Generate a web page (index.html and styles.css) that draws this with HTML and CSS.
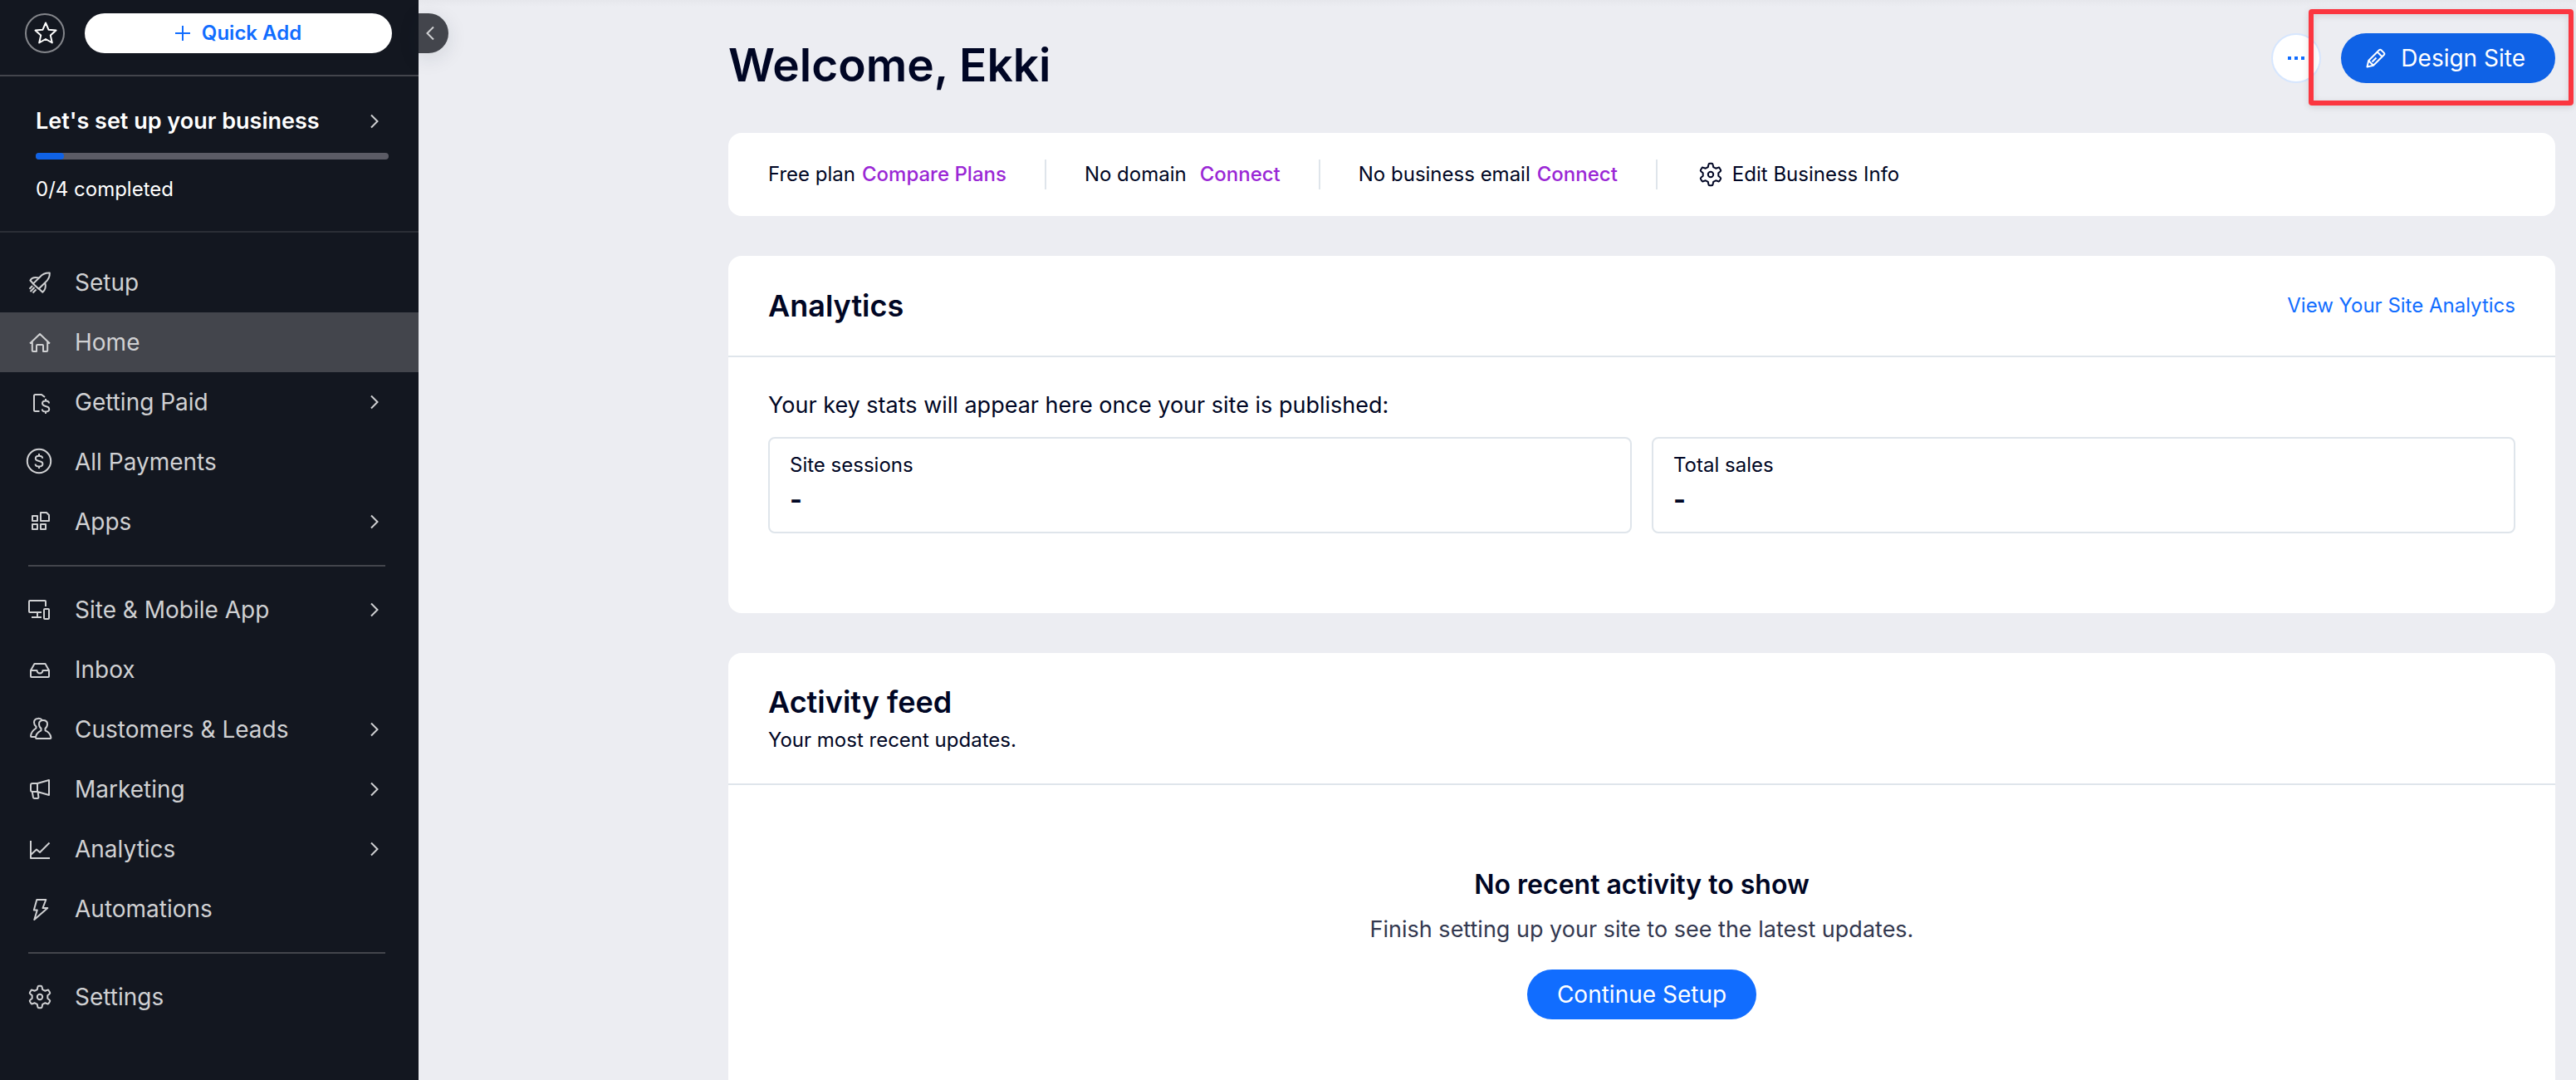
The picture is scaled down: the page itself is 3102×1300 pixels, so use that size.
FILE: index.html
```html
<!DOCTYPE html>
<html lang="en">
<head>
<meta charset="utf-8">
<meta name="viewport" content="width=device-width, initial-scale=1">
<title>Site Dashboard</title>
<link rel="stylesheet" href="styles.css">
</head>
<body>
<svg class="sprite" aria-hidden="true">
  <symbol id="gear" viewBox="0 0 36 36">
    <path transform="translate(18 18)" d="M-3.2-8.9L-2.6-12Q-2.4-13.2-1.2-13.2H1.2Q2.4-13.2 2.6-12L3.2-8.9L6.1-7.3L9.1-8.3Q10.2-8.7 10.8-7.6L12-5.6Q12.6-4.5 11.7-3.8L9.3-1.7V1.7L11.7 3.8Q12.6 4.5 12 5.6L10.8 7.6Q10.2 8.7 9.1 8.3L6.1 7.3L3.2 8.9L2.6 12Q2.4 13.2 1.2 13.2H-1.2Q-2.4 13.2-2.6 12L-3.2 8.9L-6.1 7.3L-9.1 8.3Q-10.2 8.7-10.8 7.6L-12 5.6Q-12.6 4.5-11.7 3.8L-9.3 1.7V-1.7L-11.7-3.8Q-12.6-4.5-12-5.6L-10.8-7.6Q-10.2-8.7-9.1-8.3L-6.1-7.3Z"/>
    <circle cx="18" cy="18" r="3.2"/>
  </symbol>
  <symbol id="chevron" viewBox="0 0 10 18"><path d="M1 1.5L8.5 9L1 16.5"/></symbol>
</svg>

<div class="app">
  <aside class="sidebar">
    <div class="quick">
      <button class="star" type="button" aria-label="Favorites">
        <svg class="icon" viewBox="0 0 36 36"><path d="M19 5.5L22.6 13.8L31.5 14.6L24.8 20.6L26.8 29.5L19 25L11.2 29.5L13.2 20.6L6.5 14.6L15.4 13.8Z"/></svg>
      </button>
      <button class="quick-add" type="button">
        <svg class="plus" viewBox="0 0 18 18"><path d="M9 0V18M0 9H18"/></svg>
        Quick Add
      </button>
    </div>

    <button class="collapse" type="button" aria-label="Collapse menu">
      <svg class="chevron back" viewBox="0 0 10 18"><path d="M9 1.5L1.5 9L9 16.5"/></svg>
    </button>

    <a class="progress-card" href="#">
      <span class="progress-title">Let's set up your business
        <svg class="chevron"><use href="#chevron"/></svg>
      </span>
      <span class="track"><span class="fill" style="width: 8%"></span></span>
      <span class="progress-note">0/4 completed</span>
    </a>

    <nav class="nav">
      <ul class="group">
        <li><a href="#" class="nav-item">
          <svg class="icon" viewBox="0 0 36 36"><path d="M29.8 6.6C25 6.3 21 8 18 11.5L9.8 19.6L16.6 25.8L24.5 18C28.5 14.5 30 10.5 29.8 6.6ZM17 12.5C12 11.2 8 12.5 6.4 15.5L10.5 20M24.3 18.5C25.5 23 24.5 27 21.3 29.8L16.8 25.5M9.2 22L5.5 25.8M11.5 24L6.5 29M13.5 26.5L9.5 30.5"/></svg>
          <span>Setup</span></a></li>
        <li><a href="#" class="nav-item active" aria-current="page">
          <svg class="icon" viewBox="0 0 36 36"><path d="M6 19.5L18 8L30 19.5M8.8 17.5V28Q8.8 29 10 29H14V22Q14 21 15 21H21Q22 21 22 22V29H26Q27.2 29 27.2 28V17.5"/></svg>
          <span>Home</span></a></li>
        <li><a href="#" class="nav-item">
          <svg class="icon" viewBox="0 0 36 36"><path d="M24 12L20 9H12.5Q11 9 11 10.5V27.5Q11 29 12.5 29H17.5M29 19.6C29 17.6 27.5 16.5 25 16.5S21 17.6 21 19.6S22.5 22.4 25 22.9S29.2 24.2 29.2 26.4S27.5 29.5 25 29.5S20.8 28.4 20.8 26.4M25 14V16.5M25 29.5V32"/></svg>
          <span>Getting Paid</span><svg class="chevron"><use href="#chevron"/></svg></a></li>
        <li><a href="#" class="nav-item">
          <svg class="icon" viewBox="0 0 36 36"><circle cx="17" cy="17" r="14.2"/><path d="M21.2 13.8C21.2 11.8 19.6 10.8 17 10.8S12.8 11.8 12.8 13.8S14.4 16.5 17 17S21.4 18.3 21.4 20.4S19.6 23.4 17 23.4S12.6 22.4 12.6 20.4M17 8V11M17 23.4V26"/></svg>
          <span>All Payments</span></a></li>
        <li><a href="#" class="nav-item">
          <svg class="icon" viewBox="0 0 36 36"><path d="M9 11H15V17H9ZM9 21H15V27H9ZM19 21H25V27H19ZM19 7H26L29 10V17H19Z"/></svg>
          <span>Apps</span><svg class="chevron"><use href="#chevron"/></svg></a></li>
      </ul>
      <ul class="group">
        <li><a href="#" class="nav-item">
          <svg class="icon" viewBox="0 0 36 36"><path d="M25 14V8Q25 7 24 7H6Q5 7 5 8V20Q5 21 6 21H20M15 21V27M8 27H20M24 17H28Q29 17 29 18V28Q29 29 28 29H24Q23 29 23 28V18Q23 17 24 17Z"/></svg>
          <span>Site &amp; Mobile App</span><svg class="chevron"><use href="#chevron"/></svg></a></li>
        <li><a href="#" class="nav-item">
          <svg class="icon" viewBox="0 0 36 36"><path d="M7 19L11.5 11H24.5L29 19V26Q29 27 28 27H8Q7 27 7 26ZM7 19H14.5Q14.8 22.5 18 22.5T21.5 19H29"/></svg>
          <span>Inbox</span></a></li>
        <li><a href="#" class="nav-item">
          <svg class="icon" viewBox="0 0 36 36"><path d="M14 29H30.5Q31.5 29 31.3 27.5C30.8 24 28.5 21 24.5 19.3V16.8C26.5 15.3 27 13.5 27 11.5C27 8.5 25 7 22 7S17 8.5 17 11.5C17 13.5 17.5 15.3 19.5 16.8V19.3C15.5 21.3 13.2 24 13 27.8Q13 29 14 29ZM20.5 6.6C18.8 5 17 4.7 15.5 4.9C12.5 5.2 11 7 11 9.5C11 11.5 11.5 13 13.5 14.5V16.5C9.5 19 7.2 22 7 26Q7 27 8 27H13"/></svg>
          <span>Customers &amp; Leads</span><svg class="chevron"><use href="#chevron"/></svg></a></li>
        <li><a href="#" class="nav-item">
          <svg class="icon" viewBox="0 0 36 36"><path d="M15 11L29 7V25L15 21M15 11H9Q7 11 7 13V19Q7 21 9 21H15ZM8.8 21L10 28Q10.3 29 11.5 29H15Q16.5 29 16.4 27.5L15.6 21.5"/></svg>
          <span>Marketing</span><svg class="chevron"><use href="#chevron"/></svg></a></li>
        <li><a href="#" class="nav-item">
          <svg class="icon" viewBox="0 0 36 36"><path d="M7 8V29H30M7.5 24.5L14 18.5L18 22L29.5 10.5"/></svg>
          <span>Analytics</span><svg class="chevron"><use href="#chevron"/></svg></a></li>
        <li><a href="#" class="nav-item">
          <svg class="icon" viewBox="0 0 36 36"><path d="M14.3 7H25.3L21.5 17H27.3L11.3 31L14.8 19.5H10.8Z"/></svg>
          <span>Automations</span></a></li>
      </ul>
      <ul class="group">
        <li><a href="#" class="nav-item">
          <svg class="icon"><use href="#gear"/></svg>
          <span>Settings</span></a></li>
      </ul>
    </nav>
  </aside>

  <main class="main">
    <div class="content">
      <header class="page-header">
        <h1>Welcome, Ekki</h1>
        <div class="actions">
          <button class="more" type="button" aria-label="More actions"><i></i><i></i><i></i></button>
          <div class="highlight">
            <button class="primary design" type="button">
              <svg class="pencil" viewBox="0 0 24 24"><path d="M1.5 22.5L3.2 15L16 2.3Q17.2 1.2 18.4 2.3L21.8 5.6Q22.9 6.8 21.8 8L9 20.8ZM3.2 15L9 20.8M13.8 4.5L19.5 10.2M7.5 16.5L12.5 11.5"/></svg>
              Design Site
            </button>
          </div>
        </div>
      </header>

      <section class="card info-bar">
        <div class="info"><span>Free plan</span><a href="#">Compare Plans</a></div>
        <div class="info wide"><span>No domain</span><a href="#">Connect</a></div>
        <div class="info"><span>No business email</span><a href="#">Connect</a></div>
        <button class="info edit" type="button"><svg class="icon"><use href="#gear"/></svg>Edit Business Info</button>
      </section>

      <section class="card">
        <div class="card-head">
          <h2>Analytics</h2>
          <a class="view-link" href="#">View Your Site Analytics</a>
        </div>
        <div class="analytics-body">
          <p class="lead">Your key stats will appear here once your site is published:</p>
          <div class="stats">
            <div class="stat"><span>Site sessions</span><strong>-</strong></div>
            <div class="stat"><span>Total sales</span><strong>-</strong></div>
          </div>
        </div>
      </section>

      <section class="card feed">
        <div class="card-head tall">
          <div>
            <h2>Activity feed</h2>
            <p class="sub">Your most recent updates.</p>
          </div>
        </div>
        <div class="empty">
          <h3>No recent activity to show</h3>
          <p class="lead">Finish setting up your site to see the latest updates.</p>
          <button class="primary" type="button">Continue Setup</button>
        </div>
      </section>
    </div>
  </main>
</div>
</body>
</html>
```

FILE: styles.css
```css
:root {
  --ink: #000624;
  --blue: #116dff;
  --line: #dfe5eb;
  --side: #131720;
  --side-line: #43454c;
  --side-text: #d0d1d3;
}

* { box-sizing: border-box; }

body {
  margin: 0;
  background: #ecedf2;
  color: var(--ink);
  font-family: Inter, "Noto Sans", sans-serif;
  font-size: 28px;
  line-height: 36px;
}

h1, h2, h3, p, ul { margin: 0; padding: 0; }
ul { list-style: none; }
a { color: inherit; text-decoration: none; }
button {
  border: 0;
  padding: 0;
  background: none;
  color: inherit;
  font: inherit;
  cursor: pointer;
}

svg { fill: none; stroke: currentColor; stroke-width: 2; flex: none; }
.sprite { position: absolute; width: 0; height: 0; }
.icon { width: 36px; height: 36px; stroke-linejoin: round; }
.chevron { width: 10px; height: 18px; }

.app { display: flex; min-height: 100vh; }

/* Sidebar */
.sidebar {
  position: relative;
  flex: none;
  width: 504px;
  background: var(--side);
  color: var(--side-text);
}

.quick {
  display: flex;
  gap: 24px;
  padding: 16px 32px 26px 30px;
  border-bottom: 2px solid var(--side-line);
}
.star {
  display: grid;
  place-items: center;
  width: 48px;
  height: 48px;
  border: 2px solid #84868b;
  border-radius: 50%;
  color: #fff;
}
.quick-add {
  display: flex;
  flex: 1;
  align-items: center;
  justify-content: center;
  gap: 14px;
  height: 48px;
  border-radius: 24px;
  background: #fff;
  color: var(--blue);
  font-size: 24px;
  font-weight: 600;
}
.plus { width: 18px; height: 18px; }

/* Tab that hangs over the edge of the sidebar */
.collapse {
  position: absolute;
  top: 16px;
  left: 100%;
  display: flex;
  align-items: center;
  width: 36px;
  height: 48px;
  padding-left: 9px;
  border-radius: 0 24px 24px 0;
  background: var(--side-line);
  color: var(--side-text);
  box-shadow: 0 6px 24px rgba(22, 45, 61, 0.12);
}

.progress-card {
  display: flex;
  flex-direction: column;
  padding: 36px 36px 32px 43px;
  border-bottom: 2px solid #2b2e36;
  color: #fff;
}
.progress-title {
  display: flex;
  align-items: center;
  justify-content: space-between;
  padding-right: 12px;
  font-size: 27px;
  font-weight: 600;
}
.progress-title .chevron { color: var(--side-text); }
.track {
  height: 8px;
  margin: 20px 0 18px;
  border-radius: 4px;
  background: #5b5b65;
}
.fill {
  display: block;
  height: 100%;
  border-radius: 4px;
  background: #0f62e6;
}
.progress-note { font-size: 24px; }

.nav { padding-top: 24px; }
.group + .group::before {
  content: "";
  display: block;
  height: 2px;
  margin: 16px 40px 16px 34px;
  background: var(--side-line);
}
.nav-item {
  display: flex;
  align-items: center;
  gap: 24px;
  height: 72px;
  padding: 0 48px 0 30px;
}
.nav-item.active { background: var(--side-line); }
.nav-item .chevron { margin-left: auto; }

/* Page */
.main {
  display: flex;
  flex: 1;
  min-width: 0;
  justify-content: flex-end;
  padding: 0 25px;
  background: linear-gradient(#e6e7ec, #ecedf2 8px);
}
.content {
  display: flex;
  flex: 1;
  flex-direction: column;
  max-width: 2200px;
}

.page-header {
  display: flex;
  align-items: flex-start;
  justify-content: space-between;
  padding: 40px 0 44px;
}
h1 { font-size: 55px; line-height: 76px; font-weight: 600; }
.actions { display: flex; gap: 24px; }
.more {
  display: flex;
  align-items: center;
  justify-content: center;
  gap: 4px;
  width: 60px;
  height: 60px;
  border: 2px solid #d6e6fe;
  border-radius: 50%;
  background: #fff;
}
.more i { width: 4px; height: 4px; background: var(--blue); }

.primary {
  display: inline-flex;
  align-items: center;
  height: 60px;
  padding: 0 36px;
  border-radius: 30px;
  background: var(--blue);
  color: #fff;
}
.design { gap: 18px; padding-left: 30px; background: #0f62e6; }
.pencil { width: 24px; height: 24px; stroke-linejoin: round; }

/* Frame drawn over the header around the call to action */
.highlight { position: relative; }
.highlight::after {
  content: "";
  position: absolute;
  inset: -29px -22px -27px -39px;
  border: 6px solid #fb3640;
  border-radius: 4px;
  box-shadow: 0 2px 8px rgba(0, 0, 0, 0.12), inset 0 2px 8px rgba(0, 0, 0, 0.1);
  pointer-events: none;
}

.card { margin-bottom: 48px; border-radius: 16px; background: #fff; }

.info-bar {
  display: flex;
  align-items: center;
  height: 100px;
  padding: 0 48px;
  font-size: 24px;
}
.info { display: flex; align-items: center; gap: 8px; height: 36px; }
.info.wide { gap: 16px; }
.info + .info {
  margin-left: 46px;
  padding-left: 46px;
  border-left: 2px solid var(--line);
}
.info a { color: #9a27d5; font-weight: 500; }

.card-head {
  display: flex;
  align-items: center;
  justify-content: space-between;
  height: 122px;
  padding: 0 48px;
  border-bottom: 2px solid var(--line);
}
.card-head.tall { height: 159px; }
h2 { font-size: 36px; line-height: 48px; font-weight: 600; }
.sub { margin-top: 4px; font-size: 24px; }
.view-link { color: var(--blue); font-size: 24px; }
.lead { font-size: 27px; }

.analytics-body { padding: 40px 48px 96px; }
.stats { display: flex; gap: 24px; margin-top: 20px; }
.stat {
  display: flex;
  flex: 1;
  flex-direction: column;
  height: 116px;
  padding: 14px 24px;
  border: 2px solid var(--line);
  border-radius: 8px;
}
.stat span { font-size: 24px; }
.stat strong { font-size: 32px; line-height: 48px; }

.feed { flex: 1; margin-bottom: 0; border-radius: 16px 16px 0 0; }
.empty {
  display: flex;
  flex-direction: column;
  align-items: center;
  padding: 96px 48px 72px;
}
h3 { font-size: 32px; line-height: 48px; font-weight: 600; }
.empty .lead { margin: 12px 0 30px; color: #33384f; }
```
